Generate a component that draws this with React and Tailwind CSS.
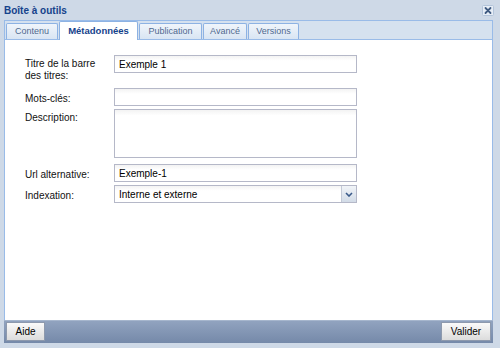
import React from 'react';

const tabs = [
  { label: 'Contenu', w: 'w-[52px]' },
  { label: 'Métadonnées', w: 'w-[79px]', active: true },
  { label: 'Publication', w: 'w-[63px]' },
  { label: 'Avancé', w: 'w-[44px]' },
  { label: 'Versions', w: 'w-[51px]' },
];

const CloseIcon = () => (
  <svg width="12" height="11" viewBox="0 0 12 11" className="block">
    <rect x="0.5" y="0.5" width="11" height="10" rx="1" fill="#e6edf6" stroke="#b3c4da" />
    <path d="M3.5 3 L8.5 8 M8.5 3 L3.5 8" stroke="#3f5a80" strokeWidth="1.8" strokeLinecap="round" />
  </svg>
);

const TextField = ({ value }) => (
  <div className="w-[243px] h-[18px] border border-[#b5b8c8] bg-linear-to-b from-[#f3f3f3] to-white to-[30%] pl-[4px] flex items-center text-[10px] text-black">
    {value}
  </div>
);

const Row = ({ label, children, className = '' }) => (
  <div className={`flex ${className}`}>
    <div className="w-[89px] pt-[3px] text-[10px] leading-[12px] text-[#111]">{label}</div>
    {children}
  </div>
);

export default function App() {
  return (
    <div className="w-[500px] h-[348px] bg-[#ced9e7] flex flex-col overflow-hidden font-['Liberation_Sans',Arial,sans-serif]">
      {/* Title bar */}
      <div className="h-[20px] flex items-center justify-between pl-[4px] pr-[6px]">
        <span className="text-[10px] font-bold text-[#15428b]">Boîte à outils</span>
        <CloseIcon />
      </div>

      {/* Tab panel */}
      <div className="ml-[4px] mr-[7px] flex-1 flex flex-col border border-[#99bbe8] border-b-0">
        <div className="h-[19px] flex items-end gap-[1px] pl-[1px] bg-[#d5e1ef] border-b border-[#99bbe8]">
          {tabs.map((t) =>
            t.active ? (
              <div
                key={t.label}
                className={`${t.w} h-[19px] -mb-px flex items-center justify-center bg-white border border-b-0 border-[#8db2e3] rounded-t-[2px] text-[9.5px] font-bold text-[#15428b]`}
              >
                {t.label}
              </div>
            ) : (
              <div
                key={t.label}
                className={`${t.w} h-[16px] flex items-center justify-center bg-linear-to-b from-[#f0f5fb] to-[#d9e5f3] border border-b-0 border-[#8db2e3] rounded-t-[2px] text-[9px] text-[#50698f]`}
              >
                {t.label}
              </div>
            )
          )}
        </div>

        <div className="flex-1 bg-white pt-[15px] pl-[20px] flex flex-col">
          <Row label={<>Titre de la barre<br />des titres:</>}>
            <TextField value="Exemple 1" />
          </Row>
          <Row label="Mots-clés:" className="mt-[6px] items-center">
            <TextField value="" />
          </Row>
          <Row label="Description:" className="mt-[3px]">
            <div className="w-[243px] h-[49px] border border-[#b5b8c8] bg-linear-to-b from-[#f3f3f3] to-white to-[12%]" />
          </Row>
          <Row label="Url alternative:" className="mt-[6px] items-center">
            <TextField value="Exemple-1" />
          </Row>
          <Row label="Indexation:" className="mt-[3px] items-center">
            <div className="w-[243px] h-[18px] border border-[#b5b8c8] flex">
              <div className="flex-1 pl-[4px] flex items-center text-[10px] text-black bg-linear-to-b from-[#f3f3f3] to-white to-[30%]">
                Interne et externe
              </div>
              <div className="w-[15px] border-l border-[#c3c9d6] bg-linear-to-b from-[#f1f4f8] to-[#d2dbe7] flex items-center justify-center">
                <svg width="8" height="5" viewBox="0 0 8 5">
                  <path d="M1 1 L4 4 L7 1" fill="none" stroke="#3a5a8a" strokeWidth="1.6" />
                </svg>
              </div>
            </div>
          </Row>
        </div>
      </div>

      {/* Bottom toolbar */}
      <div className="ml-[4px] mr-[7px] h-[23px] border-t border-[#a6b6cd] bg-linear-to-b from-[#91a3bf] to-[#7589a9] flex items-start justify-between px-[2px] pt-[1px]">
        <button className="w-[39px] h-[19px] border border-[#8d99ad] bg-linear-to-b from-[#fafafa] to-[#dcdcdc] text-[10px] text-black flex items-center justify-center">
          Aide
        </button>
        <button className="w-[50px] h-[19px] border border-[#8d99ad] bg-linear-to-b from-[#fafafa] to-[#dcdcdc] text-[10px] text-black flex items-center justify-center">
          Valider
        </button>
      </div>
      <div className="h-[5px]" />
    </div>
  );
}
